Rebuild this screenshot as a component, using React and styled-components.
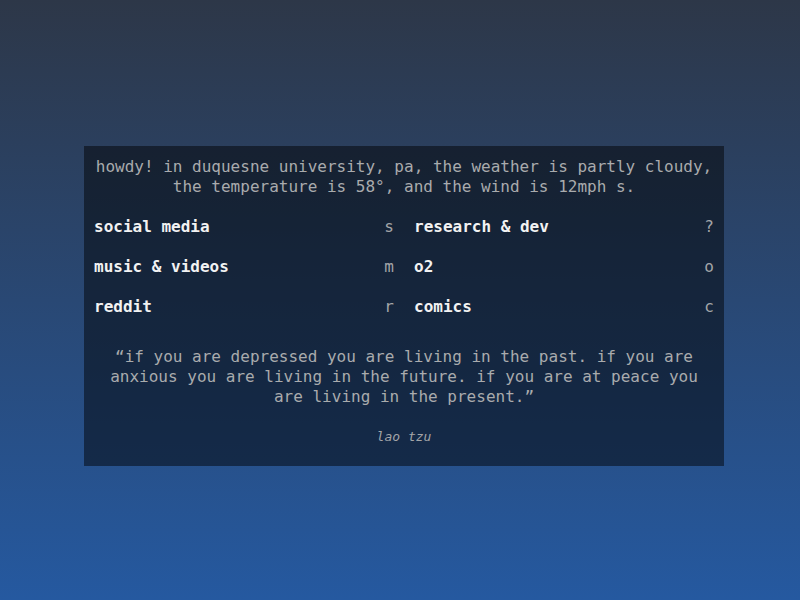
import React from "react";
import styled, { createGlobalStyle } from "styled-components";

const GlobalStyle = createGlobalStyle`
  html, body {
    margin: 0;
    padding: 0;
  }
  body {
    font-family: "DejaVu Sans Mono", monospace;
    font-size: 16px;
  }
`

const Page = styled.div`
  box-sizing: border-box;
  height: 600px;
  padding: 12px 0 0 8px;
  display: flex;
  align-items: center;
  justify-content: center;
  background: linear-gradient(to bottom, #2d3748, #2559a0);
`

const Card = styled.div`
  box-sizing: border-box;
  width: 640px;
  height: 320px;
  padding: 11px 10px 9px;
  background: rgba(0, 0, 0, 0.48);
  display: flex;
  flex-direction: column;
`

const Greeting = styled.p`
  margin: 0;
  color: #a9abad;
  line-height: 20px;
  text-align: center;
`

const Links = styled.div`
  margin-top: 20px;
  display: grid;
  grid-template-columns: 1fr 1fr;
  column-gap: 20px;
  row-gap: 20px;
`

const LinkRow = styled.a`
  display: flex;
  justify-content: space-between;
  line-height: 20px;
  text-decoration: none;
  cursor: pointer;
`

const LinkName = styled.span`
  color: #f2f2f2;
  font-weight: bold;
`

const Key = styled.span`
  color: #a3a5a8;
`

const Quote = styled.p`
  margin: 30px 0 0;
  color: #a9abad;
  line-height: 20px;
  text-align: center;
`

const Author = styled.p`
  margin: 20px 0 0;
  color: #a3a5a8;
  font-size: 13px;
  font-style: italic;
  line-height: 20px;
  text-align: center;
`

const links = [
  { name: "social media", key: "s" },
  { name: "research & dev", key: "?" },
  { name: "music & videos", key: "m" },
  { name: "o2", key: "o" },
  { name: "reddit", key: "r" },
  { name: "comics", key: "c" },
]

function App() {
  return (
    <>
      <GlobalStyle />
      <Page>
        <Card>
          <Greeting>
            howdy! in duquesne university, pa, the weather is partly cloudy,
            the temperature is 58°, and the wind is 12mph s.
          </Greeting>
          <Links>
            {links.map(l => (
              <LinkRow key={l.name}>
                <LinkName>{l.name}</LinkName>
                <Key>{l.key}</Key>
              </LinkRow>
            ))}
          </Links>
          <Quote>
            “if you are depressed you are living in the past. if you are
            anxious you are living in the future. if you are at peace you
            are living in the present.”
          </Quote>
          <Author>lao tzu</Author>
        </Card>
      </Page>
    </>
  );
}

export default App;
